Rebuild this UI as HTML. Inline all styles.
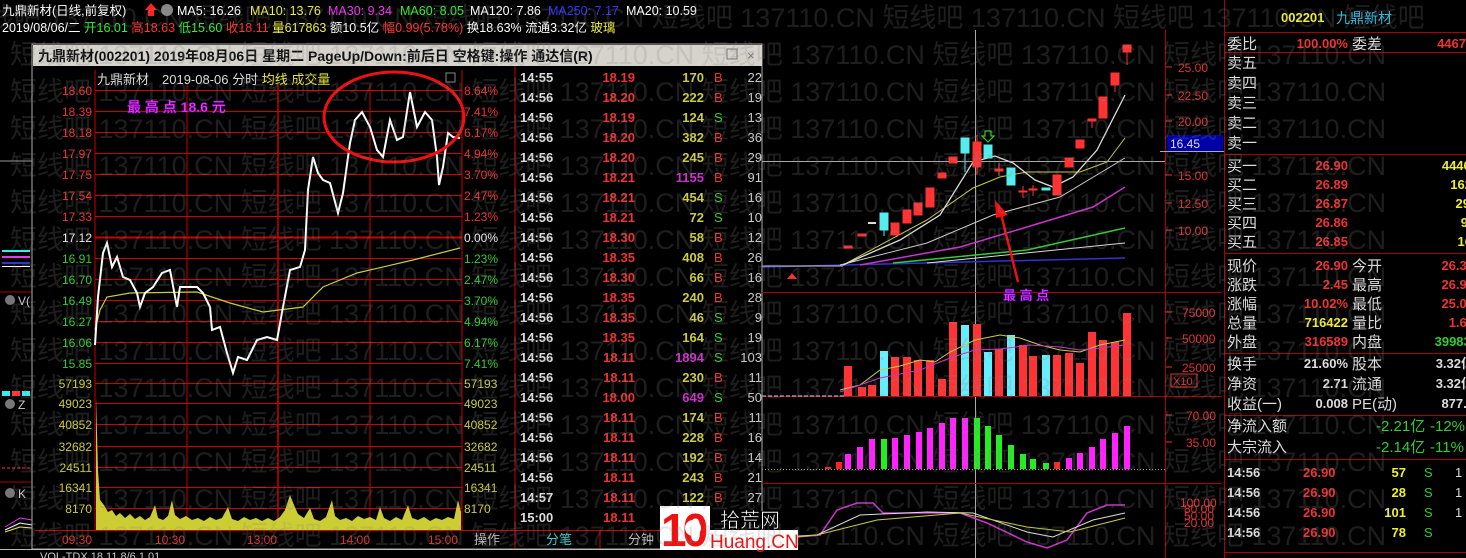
<!DOCTYPE html>
<html><head><meta charset="utf-8"><style>
html,body{margin:0;padding:0;background:#000;width:1466px;height:558px;overflow:hidden}
svg{display:block}
text{font-family:"Liberation Sans","Noto Sans CJK SC",sans-serif}
</style></head><body>
<svg width="1466" height="558" viewBox="0 0 1466 558" xmlns="http://www.w3.org/2000/svg">
<rect width="1466" height="558" fill="#000"/>
<!-- header -->
<g font-size="12.5">
<text x="2" y="15" fill="#fff">九鼎新材(日线,前复权)</text>
<path d="M148 16 L148 10 L145 10 L151 3 L157 10 L154 10 L154 16Z" fill="#f22"/>
<circle cx="167" cy="10" r="6" fill="#888"/>
<text x="177" y="15" fill="#fff">MA5: 16.26</text>
<text x="250" y="15" fill="#ee4">MA10: 13.76</text>
<text x="328" y="15" fill="#e3e">MA30: 9.34</text>
<text x="400" y="15" fill="#3e3">MA60: 8.05</text>
<text x="470" y="15" fill="#fff">MA120: 7.86</text>
<text x="548" y="15" fill="#33f">MA250: 7.17</text>
<text x="626" y="15" fill="#fff">MA20: 10.59</text>
<text x="2" y="32" fill="#fff">2019/08/06/二 <tspan fill="#3e3">开16.01</tspan> <tspan fill="#f33">高18.63</tspan> <tspan fill="#3e3">低15.60</tspan> <tspan fill="#f33">收18.11</tspan> <tspan fill="#ee4">量617863</tspan> 额10.5亿 <tspan fill="#f33">幅0.99(5.78%)</tspan> 换18.63% 流通3.32亿 <tspan fill="#ee4">玻璃</tspan></text>
</g>
<!-- left strip remnants -->
<line x1="0" y1="161" x2="32" y2="161" stroke="#999"/>
<rect x="2" y="250" width="28" height="2" fill="#3ee"/><rect x="2" y="256" width="28" height="2" fill="#e3e"/><rect x="2" y="262" width="28" height="2" fill="#33c"/><rect x="2" y="266" width="28" height="1" fill="#fff"/>
<line x1="0" y1="292" x2="32" y2="292" stroke="#a00"/>
<circle cx="10" cy="300" r="5" fill="#777"/><text x="18" y="305" fill="#ccc" font-size="12">V(</text>
<rect x="2" y="391" width="8" height="5" fill="#3ee"/><rect x="12" y="391" width="8" height="5" fill="#f33"/><rect x="22" y="391" width="8" height="5" fill="#3ee"/>
<circle cx="10" cy="404" r="5" fill="#777"/><text x="18" y="409" fill="#ccc" font-size="12">Z</text>
<line x1="2" y1="468" x2="30" y2="468" stroke="#f33" stroke-dasharray="3 2"/>
<line x1="0" y1="482" x2="32" y2="482" stroke="#a00"/>
<circle cx="10" cy="493" r="5" fill="#777"/><text x="18" y="498" fill="#ccc" font-size="12">K</text>
<path d="M5 527 L20 518 L32 520" stroke="#e3e" fill="none"/><path d="M5 530 L20 523 L32 525" stroke="#fff" fill="none"/><path d="M5 532 L20 527 L32 528" stroke="#ee4" fill="none"/>

<!-- popup -->
<rect x="32" y="44" width="730" height="505" fill="#000" stroke="#aaa"/>
<rect x="33" y="45" width="729" height="21" fill="#d6d3cc"/>
<text x="38" y="61" font-size="14" font-weight="bold" fill="#111">九鼎新材(002201) 2019年08月06日 星期二 PageUp/Down:前后日 空格键:操作 通达信(R)</text>
<rect x="727" y="49" width="10" height="10" fill="none" stroke="#777"/>
<text x="747" y="60" font-size="13" fill="#777">×</text>

<!-- intraday chart grid -->
<g stroke="#c00" stroke-width="1">
<line x1="95" y1="70" x2="95" y2="530"/><line x1="462" y1="70" x2="462" y2="530"/>
<line x1="187" y1="84" x2="187" y2="530"/><line x1="278" y1="84" x2="278" y2="530" stroke-width="1.5"/><line x1="370" y1="84" x2="370" y2="530"/>
<line x1="95" y1="90.5" x2="462" y2="90.5"/><line x1="95" y1="111.5" x2="462" y2="111.5"/><line x1="95" y1="132.5" x2="462" y2="132.5"/><line x1="95" y1="153.5" x2="462" y2="153.5"/><line x1="95" y1="174.5" x2="462" y2="174.5"/><line x1="95" y1="195.5" x2="462" y2="195.5"/><line x1="95" y1="216.5" x2="462" y2="216.5"/>
<line x1="95" y1="237.5" x2="462" y2="237.5" stroke-width="2"/>
<line x1="95" y1="258.5" x2="462" y2="258.5"/><line x1="95" y1="279.5" x2="462" y2="279.5"/><line x1="95" y1="300.5" x2="462" y2="300.5"/><line x1="95" y1="321.5" x2="462" y2="321.5"/><line x1="95" y1="342.5" x2="462" y2="342.5"/><line x1="95" y1="363.5" x2="462" y2="363.5"/>
<line x1="95" y1="383.5" x2="462" y2="383.5"/><line x1="95" y1="403.5" x2="462" y2="403.5"/><line x1="95" y1="424.5" x2="462" y2="424.5"/><line x1="95" y1="446.5" x2="462" y2="446.5"/><line x1="95" y1="467.5" x2="462" y2="467.5"/><line x1="95" y1="487.5" x2="462" y2="487.5"/><line x1="95" y1="508.5" x2="462" y2="508.5"/><line x1="35" y1="530.5" x2="762" y2="530.5"/>
<line x1="515" y1="66" x2="515" y2="548"/><line x1="600" y1="530" x2="600" y2="548"/>
</g>
<text x="97" y="84" font-size="13" fill="#ddd">九鼎新材　2019-08-06 分时 <tspan fill="#ee4">均线</tspan> <tspan fill="#dd4">成交量</tspan></text>
<rect x="446" y="73" width="9" height="9" fill="none" stroke="#888"/>
<g font-size="12" text-anchor="end">
<text x="92" y="95" fill="#e33">18.60</text><text x="92" y="116" fill="#e33">18.39</text><text x="92" y="137" fill="#e33">18.18</text><text x="92" y="158" fill="#e33">17.97</text><text x="92" y="179" fill="#e33">17.75</text><text x="92" y="200" fill="#e33">17.54</text><text x="92" y="221" fill="#e33">17.33</text><text x="92" y="242" fill="#eee">17.12</text><text x="92" y="263" fill="#3c3">16.91</text><text x="92" y="284" fill="#3c3">16.70</text><text x="92" y="305" fill="#3c3">16.49</text><text x="92" y="326" fill="#3c3">16.27</text><text x="92" y="347" fill="#3c3">16.06</text><text x="92" y="368" fill="#3c3">15.85</text>
<g fill="#cc4"><text x="92" y="388">57193</text><text x="92" y="408">49023</text><text x="92" y="429">40852</text><text x="92" y="451">32682</text><text x="92" y="472">24511</text><text x="92" y="492">16341</text><text x="92" y="513">8170</text></g>
</g>
<g font-size="12">
<text x="464" y="95" fill="#e33">8.64%</text><text x="464" y="116" fill="#e33">7.41%</text><text x="464" y="137" fill="#e33">6.17%</text><text x="464" y="158" fill="#e33">4.94%</text><text x="464" y="179" fill="#e33">3.70%</text><text x="464" y="200" fill="#e33">2.47%</text><text x="464" y="221" fill="#e33">1.23%</text><text x="464" y="242" fill="#eee">0.00%</text><text x="464" y="263" fill="#3c3">1.23%</text><text x="464" y="284" fill="#3c3">2.47%</text><text x="464" y="305" fill="#3c3">3.70%</text><text x="464" y="326" fill="#3c3">4.94%</text><text x="464" y="347" fill="#3c3">6.17%</text><text x="464" y="368" fill="#3c3">7.41%</text>
<g fill="#cc4"><text x="464" y="388">57193</text><text x="464" y="408">49023</text><text x="464" y="429">40852</text><text x="464" y="451">32682</text><text x="464" y="472">24511</text><text x="464" y="492">16341</text><text x="464" y="513">8170</text></g>
<g fill="#d33"><text x="62" y="544">09:30</text><text x="155" y="544">10:30</text><text x="247" y="544">13:00</text><text x="340" y="544">14:00</text><text x="428" y="544">15:00</text></g>
<text x="474" y="544" fill="#bbb" font-size="13">操作</text><text x="546" y="544" fill="#3cc" font-size="13">分笔</text><text x="628" y="544" fill="#bbb" font-size="13">分钟</text>
</g>
<!-- volume area -->
<path d="M96 530 L96 396 L98 470 L100 500 L104 505 L108 512 L112 510 L116 516 L120 513 L125 518 L130 514 L135 519 L140 516 L145 520 L150 517 L155 505 L158 518 L163 520 L168 516 L172 500 L175 515 L180 519 L186 516 L192 520 L198 518 L204 521 L210 517 L216 520 L222 518 L228 507 L232 519 L238 521 L244 517 L250 520 L256 518 L262 521 L268 518 L274 521 L280 517 L285 510 L290 495 L294 505 L298 514 L304 518 L310 508 L314 519 L320 521 L326 517 L332 500 L335 516 L340 520 L346 518 L352 521 L358 516 L364 519 L370 517 L376 520 L380 507 L384 518 L390 521 L396 517 L402 520 L408 505 L412 518 L418 520 L424 517 L430 521 L436 518 L442 520 L448 517 L454 519 L458 500 L461 512 L461 530Z" fill="#cc3"/>
<!-- price line -->
<polyline fill="none" stroke="#cc4" stroke-width="1.2" points="95,330 100,310 107,297 130,293 197,292 230,303 263,312 303,307 323,287 357,273 413,260 460,248"/>
<polyline fill="none" stroke="#fff" stroke-width="2" points="95,345 98,297 103,253 107,243 112,267 117,257 123,277 130,280 137,293 140,307 145,293 153,287 162,273 170,270 177,307 180,287 187,287 197,287 203,293 210,307 212,330 220,327 227,353 233,373 238,357 247,360 257,340 267,337 277,340 283,307 290,270 300,267 305,250 308,190 313,157 318,173 323,180 330,183 338,213 343,193 350,143 355,120 362,112 370,127 377,150 383,157 390,120 397,140 403,137 410,92 417,127 425,112 432,120 437,157 439,185 443,167 448,133 453,137 460,138"/>
<ellipse cx="394" cy="117" rx="70" ry="45" fill="none" stroke="#e11" stroke-width="3"/>
<text x="127" y="112" font-size="14" font-weight="bold" fill="#e4e" stroke="#70a" stroke-width="0.6">最 高 点 18.6 元</text>

<!-- tick list -->
<g font-size="13" font-weight="bold">
<g fill="#ddd">
<text x="520" y="82">14:55</text><text x="520" y="102">14:56</text><text x="520" y="122">14:56</text><text x="520" y="142">14:56</text><text x="520" y="162">14:56</text><text x="520" y="182">14:56</text><text x="520" y="202">14:56</text><text x="520" y="222">14:56</text><text x="520" y="242">14:56</text><text x="520" y="262">14:56</text><text x="520" y="282">14:56</text><text x="520" y="302">14:56</text><text x="520" y="322">14:56</text><text x="520" y="342">14:56</text><text x="520" y="362">14:56</text><text x="520" y="382">14:56</text><text x="520" y="402">14:56</text><text x="520" y="422">14:56</text><text x="520" y="442">14:56</text><text x="520" y="462">14:56</text><text x="520" y="482">14:56</text><text x="520" y="502">14:57</text><text x="520" y="522">15:00</text>
</g>
<g fill="#e33" text-anchor="end">
<text x="635" y="82">18.19</text><text x="635" y="102">18.20</text><text x="635" y="122">18.19</text><text x="635" y="142">18.20</text><text x="635" y="162">18.20</text><text x="635" y="182">18.21</text><text x="635" y="202">18.21</text><text x="635" y="222">18.21</text><text x="635" y="242">18.30</text><text x="635" y="262">18.35</text><text x="635" y="282">18.30</text><text x="635" y="302">18.35</text><text x="635" y="322">18.35</text><text x="635" y="342">18.35</text><text x="635" y="362">18.11</text><text x="635" y="382">18.11</text><text x="635" y="402">18.00</text><text x="635" y="422">18.11</text><text x="635" y="442">18.11</text><text x="635" y="462">18.11</text><text x="635" y="482">18.11</text><text x="635" y="502">18.11</text><text x="635" y="522">18.11</text>
</g>
<g fill="#cc4" text-anchor="end">
<text x="704" y="82">170</text><text x="704" y="102">222</text><text x="704" y="122">124</text><text x="704" y="142">382</text><text x="704" y="162">245</text><text x="704" y="182" fill="#c3c">1155</text><text x="704" y="202">454</text><text x="704" y="222">72</text><text x="704" y="242">58</text><text x="704" y="262">408</text><text x="704" y="282">66</text><text x="704" y="302">240</text><text x="704" y="322">46</text><text x="704" y="342">164</text><text x="704" y="362" fill="#c3c">1894</text><text x="704" y="382">230</text><text x="704" y="402" fill="#c3c">649</text><text x="704" y="422">174</text><text x="704" y="442">228</text><text x="704" y="462">192</text><text x="704" y="482">243</text><text x="704" y="502">122</text>
</g>
<g font-weight="normal">
<text x="714" y="82" fill="#e33">B</text><text x="714" y="102" fill="#e33">B</text><text x="714" y="122" fill="#3c3">S</text><text x="714" y="142" fill="#e33">B</text><text x="714" y="162" fill="#e33">B</text><text x="714" y="182" fill="#e33">B</text><text x="714" y="202" fill="#3c3">S</text><text x="714" y="222" fill="#3c3">S</text><text x="714" y="242" fill="#e33">B</text><text x="714" y="262" fill="#e33">B</text><text x="714" y="282" fill="#e33">B</text><text x="714" y="302" fill="#e33">B</text><text x="714" y="322" fill="#3c3">S</text><text x="714" y="342" fill="#3c3">S</text><text x="714" y="362" fill="#3c3">S</text><text x="714" y="382" fill="#e33">B</text><text x="714" y="402" fill="#3c3">S</text><text x="714" y="422" fill="#e33">B</text><text x="714" y="442" fill="#e33">B</text><text x="714" y="462" fill="#e33">B</text><text x="714" y="482" fill="#e33">B</text><text x="714" y="502" fill="#e33">B</text>
</g>
<g fill="#ccc" text-anchor="end" font-weight="normal">
<text x="762" y="82">22</text><text x="762" y="102">19</text><text x="762" y="122">13</text><text x="762" y="142">36</text><text x="762" y="162">29</text><text x="762" y="182">91</text><text x="762" y="202">16</text><text x="762" y="222">10</text><text x="762" y="242">12</text><text x="762" y="262">26</text><text x="762" y="282">16</text><text x="762" y="302">28</text><text x="762" y="322">9</text><text x="762" y="342">19</text><text x="762" y="362">103</text><text x="762" y="382">11</text><text x="762" y="402">50</text><text x="762" y="422">11</text><text x="762" y="442">16</text><text x="762" y="462">14</text><text x="762" y="482">21</text><text x="762" y="502">27</text>
</g>
</g>
<line x1="0" y1="549.5" x2="762" y2="549.5" stroke="#bbb"/>
<text x="40" y="560" font-size="11" fill="#ccc">VOL-TDX  18.11  8/6  1.01</text>

<!-- K chart -->
<line x1="762" y1="161.5" x2="1165" y2="161.5" stroke="#aaa"/>
<line x1="975.5" y1="30" x2="975.5" y2="558" stroke="#aaa"/>
<g stroke="#a00"><line x1="762" y1="292.5" x2="1222" y2="292.5"/><line x1="762" y1="396.5" x2="1222" y2="396.5"/><line x1="762" y1="483.5" x2="1222" y2="483.5"/><line x1="1165.5" y1="30" x2="1165.5" y2="558"/><line x1="1224.5" y1="0" x2="1224.5" y2="558"/></g>
<line x1="762" y1="469.5" x2="1165" y2="469.5" stroke="#aa6" stroke-dasharray="1 2"/>
<polyline fill="none" stroke="#33c" stroke-width="1.5" points="763,267 1125,258"/>
<polyline fill="none" stroke="#ddd" points="927,263 1125,243"/>
<polyline fill="none" stroke="#3c3" stroke-width="1.5" points="893,263 1027,250 1125,228"/>
<polyline fill="none" stroke="#c3c" stroke-width="1.5" points="860,265 960,247 1027,227 1093,207 1125,187"/>
<polyline fill="none" stroke="#ccc" points="840,265 927,243 993,215 1060,197 1125,158"/>
<polyline fill="none" stroke="#cc4" points="843,265 927,220 973,188 1000,177 1027,172 1080,172 1107,162 1125,138"/>
<polyline fill="none" stroke="#ddd" stroke-width="1.3" points="843,265 900,240 940,215 973,162 995,156 1013,163 1035,180 1053,187 1073,177 1097,150 1125,95"/>
<line x1="762" y1="266" x2="843" y2="266" stroke="#ccc"/>
<path d="M787 279 L792 273 L797 279Z" fill="#e33"/>
<g fill="#f33" stroke="#f33">
<rect x="844" y="246" width="8" height="2"/><rect x="858" y="234" width="8" height="2"/>
<rect x="891" y="223" width="8" height="12"/><rect x="903" y="210" width="8" height="13"/><rect x="914" y="203" width="8" height="12"/><rect x="926" y="188" width="8" height="19"/><rect x="938" y="173" width="8" height="5"/><rect x="949" y="157" width="8" height="6"/><rect x="973" y="142" width="8" height="25"/><rect x="995" y="169" width="8" height="2"/><rect x="1019" y="191" width="8" height="1"/><rect x="1029" y="189" width="8" height="1"/><rect x="1053" y="175" width="8" height="20"/><rect x="1065" y="158" width="8" height="9"/><rect x="1076" y="140" width="8" height="8"/><rect x="1088" y="119" width="8" height="2"/><rect x="1099" y="97" width="8" height="21"/><rect x="1111" y="73" width="8" height="12"/><rect x="1123" y="45" width="8" height="7"/>
<line x1="977" y1="135" x2="977" y2="175"/><line x1="999" y1="163" x2="999" y2="176"/><line x1="1023" y1="186" x2="1023" y2="198"/><line x1="1033" y1="185" x2="1033" y2="196"/><line x1="1092" y1="119" x2="1092" y2="128"/><line x1="1115" y1="85" x2="1115" y2="92"/><line x1="1127" y1="52" x2="1127" y2="65"/>
</g>
<rect x="868" y="222" width="8" height="2" fill="#ddd"/>
<g fill="#5ee" stroke="#5ee">
<rect x="880" y="213" width="8" height="17"/><line x1="884" y1="230" x2="884" y2="236"/><rect x="961" y="138" width="8" height="15"/><line x1="965" y1="153" x2="965" y2="172"/><rect x="984" y="145" width="8" height="13"/><rect x="1007" y="168" width="8" height="17"/><rect x="1042" y="188" width="8" height="2"/>
</g>
<path d="M985 131 L991 131 L991 136 L994 136 L988 142 L982 136 L985 136Z" fill="none" stroke="#3c3" stroke-width="1.2"/>
<path d="M1018 282 L1000 210" stroke="#e11" stroke-width="2.5"/><path d="M995 200 L1008 215 L996 218Z" fill="#e11"/>
<text x="1003" y="300" font-size="13" font-weight="bold" fill="#d4f" stroke="#60a" stroke-width="0.5">最 高 点</text>
<!-- volume bars -->
<g fill="#f33">
<rect x="844" y="366" width="8" height="30"/><rect x="858" y="387" width="8" height="9"/><rect x="868" y="385" width="8" height="11"/><rect x="891" y="357" width="8" height="39"/><rect x="903" y="357" width="8" height="39"/><rect x="914" y="360" width="8" height="36"/><rect x="926" y="360" width="8" height="36"/><rect x="938" y="379" width="8" height="17"/><rect x="949" y="322" width="8" height="74"/><rect x="973" y="324" width="8" height="72"/><rect x="995" y="349" width="8" height="47"/><rect x="1019" y="345" width="8" height="51"/><rect x="1029" y="356" width="8" height="40"/><rect x="1053" y="355" width="8" height="41"/><rect x="1065" y="353" width="8" height="43"/><rect x="1076" y="363" width="8" height="33"/><rect x="1088" y="332" width="8" height="64"/><rect x="1099" y="340" width="8" height="56"/><rect x="1111" y="342" width="8" height="54"/><rect x="1123" y="313" width="8" height="83"/>
</g>
<g fill="#6ef"><rect x="880" y="351" width="8" height="45"/><rect x="961" y="325" width="8" height="71"/><rect x="984" y="352" width="8" height="44"/><rect x="1007" y="335" width="8" height="61"/><rect x="1042" y="355" width="8" height="41"/></g>
<line x1="762" y1="396" x2="844" y2="396" stroke="#ccf" stroke-dasharray="4 2"/>
<polyline fill="none" stroke="#cc4" points="840,390 860,385 880,370 900,366 920,360 935,362 950,352 975,340 1000,335 1020,338 1040,345 1060,350 1080,352 1100,345 1125,340"/>
<polyline fill="none" stroke="#c3c" points="840,392 880,378 920,370 950,358 975,350 1000,349 1030,345 1060,347 1080,350 1100,348 1125,345"/>
<!-- MACD bars -->
<g fill="#f22"><rect x="825" y="467" width="6" height="2"/><rect x="836" y="462" width="6" height="7"/><rect x="1054" y="462" width="6" height="7"/></g>
<g fill="#f2f">
<rect x="845" y="454" width="6" height="15"/><rect x="857" y="447" width="6" height="22"/><rect x="869" y="439" width="6" height="30"/><rect x="892" y="438" width="6" height="31"/><rect x="904" y="435" width="6" height="34"/><rect x="916" y="432" width="6" height="37"/><rect x="927" y="428" width="6" height="41"/><rect x="939" y="423" width="6" height="46"/><rect x="950" y="418" width="6" height="51"/><rect x="962" y="418" width="6" height="51"/><rect x="1066" y="458" width="6" height="11"/><rect x="1077" y="453" width="6" height="16"/><rect x="1089" y="447" width="6" height="22"/><rect x="1100" y="439" width="6" height="30"/><rect x="1112" y="433" width="6" height="36"/><rect x="1124" y="426" width="6" height="43"/>
</g>
<g fill="#2e2">
<rect x="881" y="439" width="6" height="30"/><rect x="974" y="418" width="6" height="51"/><rect x="985" y="426" width="6" height="43"/><rect x="996" y="435" width="6" height="34"/><rect x="1008" y="445" width="6" height="24"/><rect x="1020" y="454" width="6" height="15"/><rect x="1030" y="459" width="6" height="10"/><rect x="1043" y="463" width="6" height="6"/>
</g>
<!-- KDJ -->
<polyline fill="none" stroke="#c3c" stroke-width="1.5" points="762,540 820,535 837,510 857,503 873,503 883,513 960,513 987,523 1027,542 1047,548 1067,540 1087,513 1107,505 1125,505"/>
<polyline fill="none" stroke="#ddd" points="762,538 817,535 860,515 927,512 973,513 1027,532 1053,537 1093,520 1125,513"/>
<polyline fill="none" stroke="#cc4" points="762,540 817,535 877,520 960,513 1027,527 1070,532 1125,518"/>
<!-- K axis -->
<g font-size="12" fill="#d33">
<text x="1178" y="72">25.00</text><text x="1178" y="100">22.50</text><text x="1178" y="126">20.00</text><text x="1178" y="180">15.00</text><text x="1178" y="208">12.50</text><text x="1178" y="235">10.00</text>
<text x="1182" y="317">75000</text><text x="1182" y="343">50000</text><text x="1182" y="372">25000</text><text x="1186" y="420">70.00</text><text x="1186" y="447">35.00</text>
<text x="1180" y="507">100.00</text><text x="1184" y="513">80.00</text><text x="1184" y="520">50.00</text><text x="1184" y="527">20.00</text>
</g>
<rect x="1171" y="374" width="26" height="13" fill="none" stroke="#d33"/><text x="1173" y="385" font-size="11" fill="#d33">X10</text>
<g stroke="#d33"><line x1="1166" y1="67" x2="1172" y2="67"/><line x1="1166" y1="95" x2="1172" y2="95"/><line x1="1166" y1="121" x2="1172" y2="121"/><line x1="1166" y1="175" x2="1172" y2="175"/><line x1="1166" y1="203" x2="1172" y2="203"/><line x1="1166" y1="230" x2="1172" y2="230"/><line x1="1166" y1="312" x2="1172" y2="312"/><line x1="1166" y1="338" x2="1172" y2="338"/><line x1="1166" y1="367" x2="1172" y2="367"/><line x1="1166" y1="415" x2="1172" y2="415"/><line x1="1166" y1="442" x2="1172" y2="442"/></g>
<rect x="1167" y="135" width="56" height="16" fill="#00a"/><text x="1170" y="148" font-size="12" fill="#ddd">16.45</text>
<line x1="1160" y1="151.5" x2="1224" y2="151.5" stroke="#aaa"/>

<!-- right panel -->
<text x="1281" y="22" font-size="13" font-weight="bold" fill="#ee3">002201</text><text x="1336" y="23" font-size="14" fill="#3bd">九鼎新材</text>
<g stroke="#a00"><line x1="1224" y1="32.5" x2="1466" y2="32.5"/><line x1="1224" y1="52.5" x2="1466" y2="52.5"/><line x1="1224" y1="154.5" x2="1466" y2="154.5"/><line x1="1224" y1="253.5" x2="1466" y2="253.5"/><line x1="1224" y1="353.5" x2="1466" y2="353.5"/><line x1="1224" y1="415.5" x2="1466" y2="415.5"/><line x1="1224" y1="459.5" x2="1466" y2="459.5"/><line x1="1224" y1="552.5" x2="1466" y2="552.5"/></g>
<g font-size="15" fill="#ddd">
<text x="1227" y="49">委比</text><text x="1352" y="49">委差</text>
<text x="1227" y="68">卖五</text><text x="1227" y="88">卖四</text><text x="1227" y="108">卖三</text><text x="1227" y="128">卖二</text><text x="1227" y="148">卖一</text>
<text x="1227" y="171">买一</text><text x="1227" y="190">买二</text><text x="1227" y="209">买三</text><text x="1227" y="228">买四</text><text x="1227" y="247">买五</text>
<text x="1227" y="271">现价</text><text x="1227" y="290">涨跌</text><text x="1227" y="309">涨幅</text><text x="1227" y="328">总量</text><text x="1227" y="347">外盘</text>
<text x="1352" y="271">今开</text><text x="1352" y="290">最高</text><text x="1352" y="309">最低</text><text x="1352" y="328">量比</text><text x="1352" y="347">内盘</text>
<text x="1227" y="369">换手</text><text x="1227" y="389">净资</text><text x="1227" y="409">收益(一)</text>
<text x="1352" y="369">股本</text><text x="1352" y="389">流通</text><text x="1352" y="409">PE(动)</text>
<text x="1227" y="431">净流入额</text><text x="1227" y="452">大宗流入</text>
</g>
<g font-size="13" font-weight="bold" text-anchor="end">
<text x="1348" y="48" fill="#e33">100.00%</text><text x="1466" y="48" fill="#e33">4467</text>
<g fill="#e33"><text x="1348" y="170">26.90</text><text x="1348" y="189">26.89</text><text x="1348" y="208">26.87</text><text x="1348" y="227">26.86</text><text x="1348" y="246">26.85</text></g>
<g fill="#ee3"><text x="1478" y="170">44464</text><text x="1472" y="189">162</text><text x="1470" y="208">29</text><text x="1468" y="227">9</text><text x="1472" y="246">16</text></g>
<text x="1348" y="270" fill="#e33">26.90</text><text x="1348" y="289" fill="#e33">2.45</text><text x="1348" y="308" fill="#e33">10.02%</text><text x="1348" y="327" fill="#ee3">716422</text><text x="1348" y="346" fill="#e33">316589</text>
<text x="1474" y="270" fill="#e33">26.30</text><text x="1474" y="289" fill="#e33">26.90</text><text x="1474" y="308" fill="#e33">25.00</text><text x="1474" y="327" fill="#e33">1.65</text><text x="1478" y="346" fill="#3c3">399833</text>
<text x="1348" y="368" fill="#ddd">21.60%</text><text x="1348" y="388" fill="#ddd">2.71</text><text x="1348" y="408" fill="#ddd">0.008</text>
<text x="1474" y="368" fill="#ddd">3.32亿</text><text x="1474" y="388" fill="#ddd">3.32亿</text><text x="1474" y="408" fill="#ddd">877.1</text>
</g>
<g font-size="15" fill="#3c3"><text x="1376" y="431">-2.21亿</text><text x="1430" y="431">-12%</text><text x="1376" y="452">-2.14亿</text><text x="1430" y="452">-11%</text></g>
<g font-size="13" font-weight="bold">
<text x="1227" y="477" fill="#ddd">14:56</text><text x="1227" y="497" fill="#ddd">14:56</text><text x="1227" y="517" fill="#ddd">14:56</text><text x="1227" y="537" fill="#ddd">14:56</text>
<text x="1303" y="477" fill="#e33">26.90</text><text x="1303" y="497" fill="#e33">26.90</text><text x="1303" y="517" fill="#e33">26.90</text><text x="1303" y="537" fill="#e33">26.90</text>
<g text-anchor="end" fill="#ee3"><text x="1406" y="477">57</text><text x="1406" y="497">28</text><text x="1406" y="517">101</text><text x="1406" y="537">78</text></g>
<text x="1424" y="477" fill="#3c3" font-weight="normal">S</text><text x="1424" y="497" fill="#3c3" font-weight="normal">S</text><text x="1424" y="517" fill="#3c3" font-weight="normal">S</text><text x="1424" y="537" fill="#3c3" font-weight="normal">S</text>
<g fill="#ddd" font-weight="normal"><text x="1455" y="477">1</text><text x="1455" y="497">1</text><text x="1455" y="517">1</text></g>
</g>

<!-- logo -->
<rect x="660" y="506" width="50" height="44" fill="#fff"/>
<text x="661" y="546" font-size="46" font-weight="bold" fill="#e11" letter-spacing="-4">10</text>
<circle cx="693" cy="528" r="8" fill="#fff"/>
<text x="720" y="527" font-size="20" fill="#fff" stroke="#000" stroke-width="0.5">拾荒网</text>
<rect x="708" y="530" width="90" height="20" fill="#fff"/>
<text x="710" y="548" font-size="19" fill="#e11">Huang.CN</text>

<!-- watermark -->
<g font-size="27" fill="#888" fill-opacity="0.22">
<text x="-40" y="27">短线吧 137110.CN 短线吧 137110.CN 短线吧 137110.CN 短线吧 137110.CN 短线吧 137110.CN 短线吧 137110.CN 短线吧</text>
<text x="10" y="64">短线吧 137110.CN 短线吧 137110.CN 短线吧 137110.CN 短线吧 137110.CN 短线吧 137110.CN 短线吧 137110.CN</text>
<text x="10" y="101">短线吧 137110.CN 短线吧 137110.CN 短线吧 137110.CN 短线吧 137110.CN 短线吧 137110.CN 短线吧 137110.CN</text>
<text x="10" y="138">短线吧 137110.CN 短线吧 137110.CN 短线吧 137110.CN 短线吧 137110.CN 短线吧 137110.CN 短线吧 137110.CN</text>
<text x="10" y="175">短线吧 137110.CN 短线吧 137110.CN 短线吧 137110.CN 短线吧 137110.CN 短线吧 137110.CN 短线吧 137110.CN</text>
<text x="10" y="212">短线吧 137110.CN 短线吧 137110.CN 短线吧 137110.CN 短线吧 137110.CN 短线吧 137110.CN 短线吧 137110.CN</text>
<text x="10" y="249">短线吧 137110.CN 短线吧 137110.CN 短线吧 137110.CN 短线吧 137110.CN 短线吧 137110.CN 短线吧 137110.CN</text>
<text x="10" y="286">短线吧 137110.CN 短线吧 137110.CN 短线吧 137110.CN 短线吧 137110.CN 短线吧 137110.CN 短线吧 137110.CN</text>
<text x="10" y="323">短线吧 137110.CN 短线吧 137110.CN 短线吧 137110.CN 短线吧 137110.CN 短线吧 137110.CN 短线吧 137110.CN</text>
<text x="10" y="360">短线吧 137110.CN 短线吧 137110.CN 短线吧 137110.CN 短线吧 137110.CN 短线吧 137110.CN 短线吧 137110.CN</text>
<text x="10" y="397">短线吧 137110.CN 短线吧 137110.CN 短线吧 137110.CN 短线吧 137110.CN 短线吧 137110.CN 短线吧 137110.CN</text>
<text x="10" y="434">短线吧 137110.CN 短线吧 137110.CN 短线吧 137110.CN 短线吧 137110.CN 短线吧 137110.CN 短线吧 137110.CN</text>
<text x="10" y="471">短线吧 137110.CN 短线吧 137110.CN 短线吧 137110.CN 短线吧 137110.CN 短线吧 137110.CN 短线吧 137110.CN</text>
<text x="10" y="508">短线吧 137110.CN 短线吧 137110.CN 短线吧 137110.CN 短线吧 137110.CN 短线吧 137110.CN 短线吧 137110.CN</text>
<text x="10" y="545">短线吧 137110.CN 短线吧 137110.CN 短线吧 137110.CN 短线吧 137110.CN 短线吧 137110.CN 短线吧 137110.CN</text>
</g>
</svg>
</body></html>
